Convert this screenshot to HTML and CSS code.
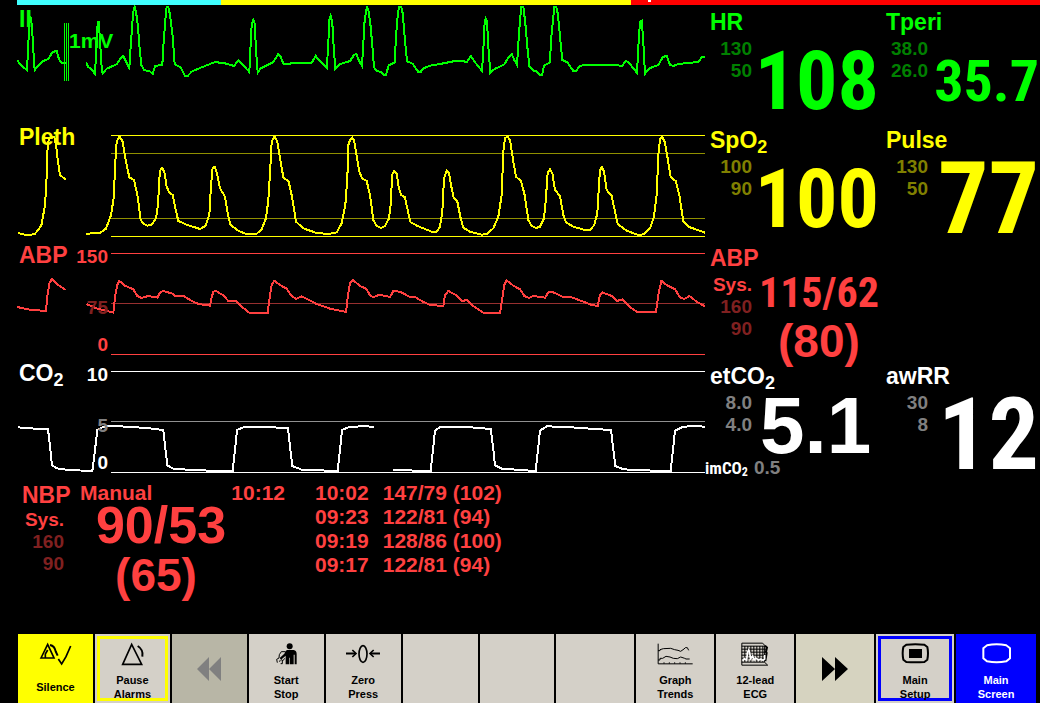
FILE: index.html
```html
<!DOCTYPE html>
<html lang="en">
<head>
<meta charset="utf-8">
<title>Patient Monitor</title>
<link rel="stylesheet" href="styles.css">
</head>
<body>
<div class="monitor">
  <header class="alarms">
    <div class="alarm alarm-cyan"></div>
    <div class="alarm alarm-yellow"></div>
    <div class="alarm alarm-red"><span class="tick"></span></div>
  </header>

  <main class="channels">
    <section class="wave green">
      <svg class="trace" viewBox="51 15 2064 354" preserveAspectRatio="none">
        <path class="grid-line" d="M193.5,69V243M199.5,69V243M205.5,69V243"/>
        <path class="curve" d="M51,180 60,192 72,203 81,210 84,150 88,70 92,50 96,80 100,150 104,210 113,198 128,184 145,177 157,157 170,152 177,178 185,188 198,188"/>
        <path class="curve" d="M259,187 264,200 275,208 285,222 288,165 291,85 296,62 300,120 304,190 308,221 320,206 350,193 362,174 370,168 378,185 388,204 392,140 397,70 400,35 404,20 408,35 414,80 418,135 424,195 433,211 448,213 458,222 465,198 487,194 490,140 496,60 500,20 505,20 510,45 518,110 524,193 542,202 555,228 563,228 575,215 600,204 645,186 680,191 702,198 715,181 725,191 748,216 751,150 755,75 760,60 764,70 768,150 773,218 782,205 820,186 835,162 842,170 850,191 870,191 880,188 935,188 947,168 958,182 980,204 984,150 988,60 992,47 997,70 1001,140 1006,207 1018,193 1050,183 1062,165 1069,162 1076,180 1086,198 1090,130 1094,60 1101,20 1106,35 1112,80 1118,150 1122,202 1132,214 1143,215 1152,225 1158,225 1166,196 1184,187 1188,110 1193,50 1197,20 1204,20 1208,40 1214,110 1221,184 1238,191 1255,216 1262,216 1270,205 1290,197 1320,192 1365,183 1390,183 1400,187 1413,168 1422,183 1446,213 1450,150 1454,65 1457,56 1461,65 1465,140 1471,218 1484,207 1513,193 1526,171 1535,162 1542,178 1551,195 1555,130 1560,60 1564,20 1570,20 1576,70 1582,140 1588,198 1598,211 1608,213 1620,225 1626,225 1632,197 1650,187 1653,120 1660,50 1663,20 1669,20 1674,45 1681,120 1687,180 1703,188 1720,213 1728,213 1738,200 1752,194 1847,194 1865,199 1878,182 1890,192 1911,219 1915,140 1920,65 1925,62 1929,110 1935,221 1948,205 1975,195 1988,172 2000,167 2010,195 2020,198 2035,192 2095,186 2105,172 2115,172"/>
      </svg>
      <h2 class="wave-name">II</h2>
      <span class="gain">1mV</span>
    </section>
    <section class="reading green">
      <h2 class="name">HR</h2>
      <div class="limits"><span>130</span><span>50</span></div>
      <div class="value narrow size-hr">108</div>
    </section>
    <section class="reading edge green">
      <h2 class="name">Tperi</h2>
      <div class="limits"><span>38.0</span><span>26.0</span></div>
      <div class="value narrow size-temp">35.7</div>
    </section>

    <section class="wave yellow">
      <svg class="trace" viewBox="51 -6 2064 354" preserveAspectRatio="none">
        <path class="grid-line" d="M333,31.5H2115M333,334.5H2115"/>
        <path class="grid-line faint" d="M333,85.5H2115M333,280.5H2115"/>
        <path class="curve" d="M53,324 65,327 80,330 103,328 115,315 125,298 135,240 139,180 142,80 146,45 153,34 163,36 168,60 174,110 180,150 190,158 197,163"/>
        <path class="curve" d="M259,326 300,324 318,311 333,270 341,220 346,110 350,50 359,34 368,50 378,110 388,157 402,165 413,215 422,285 432,297 442,302 456,298 468,280 474,240 478,160 482,132 487,129 494,145 500,185 508,203 518,210 526,250 535,288 560,299 600,312 616,303 628,270 633,180 638,128 645,126 652,150 660,190 675,215 685,275 692,300 715,317 740,328 768,328 785,313 798,280 805,225 812,110 815,50 824,34 832,50 842,110 850,157 866,170 876,215 888,290 910,310 950,324 985,327 1010,322 1025,295 1036,240 1042,160 1045,60 1050,45 1057,38 1062,45 1068,80 1078,140 1086,160 1100,168 1110,210 1120,285 1130,303 1143,309 1155,303 1167,280 1173,230 1176,150 1183,138 1190,145 1196,185 1203,210 1215,217 1224,260 1232,292 1255,304 1295,320 1310,320 1320,305 1327,260 1332,160 1340,138 1347,145 1354,185 1361,218 1372,230 1382,280 1390,308 1410,320 1445,329 1460,327 1480,310 1495,275 1505,210 1510,80 1515,40 1522,34 1530,45 1540,110 1548,155 1563,168 1574,210 1585,285 1595,303 1608,309 1620,305 1632,280 1637,230 1643,145 1650,132 1657,145 1665,195 1680,213 1690,270 1698,292 1720,305 1755,315 1770,315 1783,300 1792,265 1798,160 1802,130 1806,127 1812,140 1820,195 1835,213 1845,260 1853,297 1880,317 1915,330 1930,328 1950,310 1962,275 1970,210 1975,90 1980,42 1986,34 1994,50 2003,100 2012,157 2027,168 2038,210 2050,290 2065,305 2115,323"/>
      </svg>
      <h2 class="wave-name">Pleth</h2>
    </section>
    <section class="reading yellow">
      <h2 class="name">SpO<sub>2</sub></h2>
      <div class="limits"><span>100</span><span>90</span></div>
      <div class="value narrow size-hr">100</div>
    </section>
    <section class="reading edge yellow">
      <h2 class="name">Pulse</h2>
      <div class="limits"><span>130</span><span>50</span></div>
      <div class="value narrow size-rate">77</div>
    </section>

    <section class="wave red">
      <svg class="trace" viewBox="51 3 2064 354" preserveAspectRatio="none">
        <path class="grid-line" d="M333,40.5H2115M333,343.5H2115"/>
        <path class="grid-line faint" d="M333,190.5H2115"/>
        <path class="curve" d="M51,201 90,209 138,213 142,170 148,130 156,117 175,135 197,150"/>
        <path class="curve" d="M259,192 290,205 340,218 346,165 352,135 358,123 375,137 400,148 412,168 425,174 445,168 473,173 478,160 488,153 515,160 525,167 550,167 570,180 595,192 630,197 634,175 640,155 648,153 670,166 685,183 707,182 725,200 748,218 803,219 808,180 815,135 823,122 840,135 860,146 875,168 888,177 905,169 950,192 990,206 1038,216 1044,165 1050,128 1059,120 1080,138 1097,145 1110,165 1120,172 1138,164 1170,171 1180,153 1200,155 1230,171 1245,171 1265,183 1290,195 1330,198 1335,165 1345,153 1368,165 1385,183 1402,180 1420,198 1450,218 1500,220 1506,180 1513,135 1520,121 1540,137 1560,148 1573,168 1587,174 1600,168 1635,173 1645,157 1660,157 1690,171 1710,170 1750,185 1775,195 1793,198 1800,165 1807,157 1835,168 1850,183 1868,178 1890,201 1912,216 1968,217 1975,165 1984,122 2000,135 2025,148 2040,172 2053,177 2068,168 2090,185 2115,199"/>
      </svg>
      <h2 class="wave-name">ABP</h2>
      <div class="scale"><span>150</span><span class="mid">75</span><span>0</span></div>
    </section>
    <section class="reading red">
      <h2 class="name">ABP</h2>
      <div class="limits"><span class="source">Sys.</span><span>160</span><span>90</span></div>
      <div class="value pair"><span class="narrow size-abp">115/62</span><span class="size-mean">(80)</span></div>
    </section>
    <section class="reading edge"></section>

    <section class="wave white">
      <svg class="trace" viewBox="51 -3 2064 354" preserveAspectRatio="none">
        <path class="grid-line" d="M333,34.5H2115M333,337.5H2115"/>
        <path class="grid-line faint" d="M333,184.5H2115"/>
        <path class="curve" d="M53,202 105,206 144,207 150,260 156,315 170,325 205,330 277,333 285,270 292,210 310,200 345,198 440,204 490,210 496,265 502,316 520,326 590,331 698,333 705,270 711,210 730,202 790,201 864,204 870,260 877,318 905,329 1013,333 1020,270 1026,210 1045,202 1090,198 1122,201"/>
        <path class="curve" d="M1179,329 1245,332 1292,333 1299,270 1305,212 1320,201 1400,201 1472,207 1479,260 1485,316 1505,326 1607,333 1614,270 1620,212 1640,199 1700,201 1800,208 1833,210 1839,260 1846,318 1870,328 1930,331 2012,333 2019,270 2025,212 2050,200 2095,198 2115,201"/>
      </svg>
      <h2 class="wave-name">CO<sub>2</sub></h2>
      <div class="scale"><span>10</span><span class="mid">5</span><span>0</span></div>
    </section>
    <section class="reading with-foot white">
      <h2 class="name">etCO<sub>2</sub></h2>
      <div class="limits"><span>8.0</span><span>4.0</span></div>
      <div class="value start size-co2">5.1</div>
      <p class="foot"><span class="narrow">imCO<sub>2</sub></span><span class="foot-value">0.5</span></p>
    </section>
    <section class="reading edge white">
      <h2 class="name">awRR</h2>
      <div class="limits"><span>30</span><span>8</span></div>
      <div class="value narrow size-rate">12</div>
    </section>
  </main>

  <section class="nbp red">
    <div class="nbp-current">
      <h2 class="name">NBP</h2>
      <div class="nbp-mode"><span>Manual</span><time>10:12</time></div>
      <div class="limits"><span class="source">Sys.</span><span>160</span><span>90</span></div>
      <div class="nbp-value"><span class="size-nbp">90/53</span><span class="nbp-mean size-mean">(65)</span></div>
    </div>
    <table class="history">
      <tr><td>10:02</td><td>147/79 (102)</td></tr>
      <tr><td>09:23</td><td>122/81 (94)</td></tr>
      <tr><td>09:19</td><td>128/86 (100)</td></tr>
      <tr><td>09:17</td><td>122/81 (94)</td></tr>
    </table>
  </section>

  <nav class="keys">
    <button class="key key-yellow" type="button">
      <span class="icon"><svg width="33" height="24" viewBox="117 502 99 72"><g class="ink"><path d="M123,550 143,509 162,550Z"/><path d="M136,550V538L143,526"/><path d="M175,553 185,568 198,546 212,514"/></g><path class="ink bold" d="M150,511Q164,514 167,530L173,543"/></svg></span>
      <span class="label">Silence</span>
    </button>
    <button class="key key-framed" type="button">
      <span class="icon"><svg width="25" height="24" viewBox="359 502 75 72"><path class="ink" d="M367,569 394,509 424,569Z"/><path class="ink bold" d="M412,514Q430,525 426,546"/></svg></span>
      <span class="label">Pause<br>Alarms</span>
    </button>
    <button class="key key-disabled" type="button" disabled aria-label="Previous">
      <svg width="24" height="24" viewBox="0 0 24 24"><path d="M0,12 12,0V24ZM12,12 24,0V24Z" fill="#808080"/></svg>
    </button>
    <button class="key" type="button">
      <span class="icon"><svg width="24" height="24" viewBox="817 500 72 72"><circle cx="864" cy="513" r="9"/><path d="M852,527 856,524H876Q885,526 885,536V567H879V538H876V567H865V547H863V567H852V541L838,553 834,548 848,535Z"/><path class="ink thin" d="M851,529H839L833,538 832,548 825,552 827,562M838,553 844,556 849,549M842,557V565H837M832,558 837,556"/></svg></span>
      <span class="label">Start<br>Stop</span>
    </button>
    <button class="key" type="button">
      <span class="icon"><svg width="36" height="24" viewBox="1035 501 108 72"><ellipse class="ink" cx="1089" cy="537" rx="12" ry="25"/><path class="ink bold" d="M1038,535.500H1066M1140,535.500H1112"/><path class="ink" d="M1057,525 1068,535.500 1057,546M1121,525 1110,535.500 1121,546"/></svg></span>
      <span class="label">Zero<br>Press</span>
    </button>
    <button class="key" type="button" aria-label="Unassigned key 1"></button>
    <button class="key" type="button" aria-label="Unassigned key 2"></button>
    <button class="key" type="button" aria-label="Unassigned key 3"></button>
    <button class="key" type="button">
      <span class="icon"><svg width="36" height="24" viewBox="409 67 108 72"><path class="ink thin" d="M412.500,72V132.500H516M430,132V128M446,132V128M462,132V128M478,132V128M494,132V128M412,121H418V116H426L436,110 448,112 458,116 470,117 480,112 492,116 496,118H507M412,93H418V90L428,87 450,86 462,90 472,92 480,95 490,88 494,84H500L504,92"/></svg></span>
      <span class="label">Graph<br>Trends</span>
    </button>
    <button class="key" type="button">
      <span class="icon"><svg width="28" height="24" viewBox="662 67 84 72"><path class="ink thin" d="M664.500,70.500H727L733,77V128L742,136.500H664.500ZM664,79.500H733M664,88.500H738M664,97.500H738M664,106.500H738M664,115.500H735M664,127.500H733M673.500,79V127M682.500,79V127M691.500,79V127M700.500,79V127M709.500,79V127M718.500,79V127M727.500,79V127"/><path class="ink bold" d="M734,78 740,84 737,96 739,100 735,124"/><path class="chart" d="M667,123 672,117 679,121 682,97 685,91 688,99 691,117 697,109 701,121 706,115 715,121 722,118 728,122 733,118V106"/></svg></span>
      <span class="label">12-lead<br>ECG</span>
    </button>
    <button class="key key-next" type="button" aria-label="Next">
      <svg width="26" height="24" viewBox="0 0 26 24"><path d="M0,0 13,12 0,24ZM13,0 26,12 13,24Z"/></svg>
    </button>
    <button class="key key-framed key-setup" type="button">
      <span class="icon"><svg width="29" height="21" viewBox="1140 72 87 63"><path class="ink bold" d="M1156,77Q1183,75 1210,77L1219,84Q1223,103 1219,122L1210,129Q1183,131 1156,129L1147,122Q1143,103 1147,84Z"/><path d="M1164,90H1203V117H1164Z"/></svg></span>
      <span class="label">Main<br>Setup</span>
    </button>
    <button class="key key-blue" type="button">
      <span class="icon"><svg width="31" height="21" viewBox="1379 72 93 63"><path class="ink bold" d="M1397,79Q1426,73 1455,79L1466,88V118L1455,127Q1426,133 1397,127L1386,118V88Z"/></svg></span>
      <span class="label">Main<br>Screen</span>
    </button>
  </nav>
</div>
</body>
</html>
```

FILE: styles.css
```css
* { box-sizing: border-box; }

body {
  margin: 0;
  background: #000;
  font-family: "Liberation Sans", Arial, sans-serif;
  font-weight: bold;
}

h2, p { margin: 0; }

.monitor {
  display: flex;
  flex-direction: column;
  min-height: 100vh;
}

/* channel colours */
.green { --main: #00ff00; --dim: #008000; --line: #008000; }
.yellow { --main: #ffff00; --dim: #808000; --line: #909000; }
.red { --main: #ff4040; --dim: #802020; --line: #983030; }
.white { --main: #ffffff; --dim: #808080; --line: #909090; }

/* alarm strip */
.alarms {
  display: grid;
  grid-template-columns: 204fr 410fr 409fr;
  height: 5px;
  padding-left: 17px;
}
.alarm-cyan { background: #40ffff; }
.alarm-yellow { background: #ffff00; }
.alarm-red { background: #ff0000; padding-left: 17px; }
.tick { display: block; width: 3px; height: 2px; background: #fff; }

/* waveforms and readings */
.channels {
  display: grid;
  grid-template-columns: minmax(0, 688fr) minmax(0, 181fr) minmax(0, 154fr);
  grid-auto-rows: 118px;
  padding-left: 17px;
}

.wave { position: relative; color: var(--main); }
.trace { display: block; width: 100%; height: 100%; }
.curve, .grid-line {
  fill: none;
  stroke: var(--main);
  vector-effect: non-scaling-stroke;
}
.curve { stroke-width: 2px; shape-rendering: crispEdges; }
.grid-line { stroke-width: 1px; shape-rendering: crispEdges; }
.faint { stroke: var(--line); }

.wave-name, .name { font-size: 23px; font-weight: bold; }
.wave-name {
  position: absolute;
  top: 0;
  left: 2px;
  line-height: 28px;
}
sub { font-size: 18px; line-height: 0; vertical-align: -5px; }

.gain {
  position: absolute;
  top: 26px;
  left: 52px;
  font-size: 21px;
  line-height: 20px;
}
.scale {
  position: absolute;
  top: 6px;
  left: 51px;
  width: 40px;
  display: grid;
  grid-template-rows: 51px 37px 20px;
  font-size: 19px;
  line-height: 20px;
  text-align: right;
}
.mid { color: var(--dim); }

.reading {
  display: grid;
  grid-template-columns: 42px minmax(0, 1fr);
  grid-template-rows: 34px 84px;
  padding: 0 7px 0 5px;
  color: var(--main);
}
.edge { padding: 0 1px 0 0; }
.with-foot { grid-template-rows: 34px 66px 18px; }
.name { grid-column: 1 / -1; line-height: 34px; white-space: nowrap; }

.limits {
  display: flex;
  flex-direction: column;
  color: var(--dim);
  font-size: 19px;
  line-height: 22px;
  text-align: right;
}
.reading .limits { margin-top: -1px; }
.source { color: var(--main); }

.value {
  align-self: center;
  justify-self: end;
  line-height: 84px;
  white-space: nowrap;
}
.start { justify-self: start; padding-left: 8px; line-height: 66px; }
.pair, .nbp-value {
  display: flex;
  flex-direction: column;
  align-items: center;
}
.pair { line-height: 48px; }

.narrow { font-family: "Roboto Condensed", "Arial Narrow", "Liberation Sans", sans-serif; }
.size-hr { font-size: 82px; }
.size-temp { font-size: 58px; }
.size-rate { font-size: 100px; }
.size-co2 { font-size: 80px; }
.size-abp { font-size: 42px; }
.size-nbp { font-size: 52px; }
.size-mean { font-size: 46px; }

.foot {
  grid-column: 1 / -1;
  display: flex;
  gap: 6px;
  margin-left: -5px;
  font-size: 17px;
  line-height: 18px;
}
.foot sub { font-size: 12px; vertical-align: -2px; }
.foot-value { color: var(--dim); font-size: 19px; }

/* non-invasive pressure */
.nbp {
  display: flex;
  flex: 1;
  align-items: flex-start;
  padding: 4px 0 0 22px;
  color: var(--main);
}
.nbp-current {
  display: grid;
  grid-template-columns: 58px 205px;
  grid-template-rows: 28px auto;
  margin-right: 30px;
}
.nbp .name { grid-column: 1; line-height: 28px; }
.nbp-mode {
  display: flex;
  justify-content: space-between;
  font-size: 21px;
  line-height: 24px;
}
.nbp .limits { width: 42px; }
.nbp-value { width: 162px; margin-top: -9px; line-height: 50px; }
.nbp-mean { padding-right: 10px; }

.history {
  border-collapse: collapse;
  font-size: 21px;
  line-height: 24px;
}
.history td { padding: 0 14px 0 0; }

/* soft keys */
.keys {
  display: grid;
  grid-template-columns: repeat(7, 75fr) repeat(5, 78fr) 80fr;
  grid-auto-rows: 69px;
  gap: 2px;
  padding: 0 4px 0 18px;
}
.key {
  display: flex;
  flex-direction: column;
  align-items: center;
  justify-content: center;
  min-width: 0;
  padding: 0;
  border: 0;
  background: #d4d0c8;
  color: #000;
  font: bold 11px/14px "Liberation Sans", Arial, sans-serif;
}
.icon {
  display: flex;
  flex: 1;
  align-items: center;
}
.label {
  display: flex;
  align-items: center;
  height: 28px;
  margin-bottom: 2px;
}
.key svg { display: block; fill: currentColor; }
.key svg .ink {
  fill: none;
  stroke: currentColor;
  stroke-width: 5;
}
.key svg .bold { stroke-width: 6; }
.key svg .ink.thin { stroke-width: 3; }
.key svg .chart { fill: none; stroke: #fff; stroke-width: 5; }

.key-yellow { background: #ffff00; }
.key-framed { box-shadow: inset 0 0 0 2px #d4d0c8, inset 0 0 0 5px #ffff00; }
.key-setup { box-shadow: inset 0 0 0 2px #d4d0c8, inset 0 0 0 5px #0000ff; }
.key-disabled { background: #b8b6a6; }
.key-next { background: #d6d3c0; }
.key-blue { background: #0000ff; color: #fff; }
```
